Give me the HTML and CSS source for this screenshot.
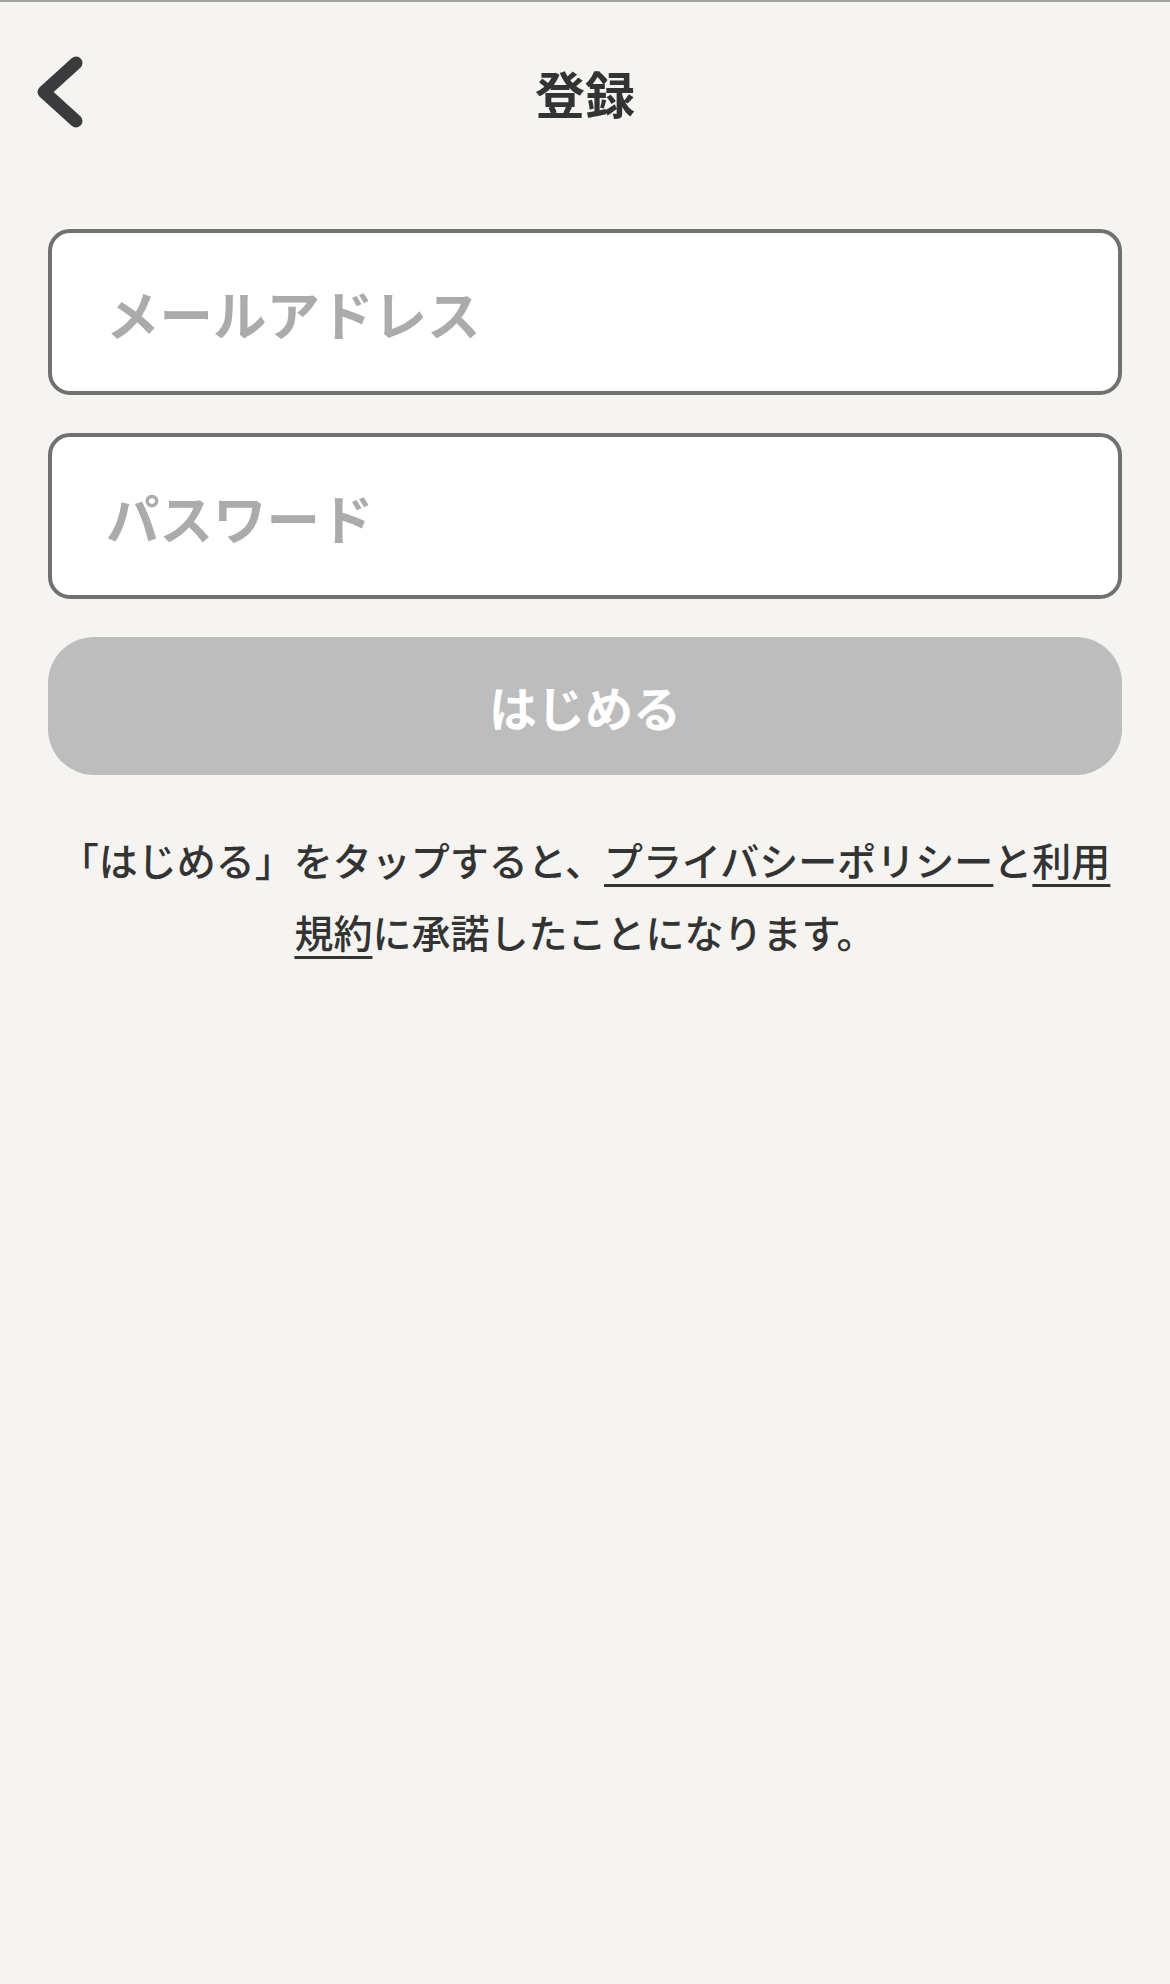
FILE: index.html
```html
<!DOCTYPE html>
<html lang="ja">
<head>
<meta charset="utf-8">
<title>登録</title>
<link rel="stylesheet" href="styles.css">
</head>
<body>
<div class="screen">
  <header class="header">
    <button class="back" aria-label="戻る">
      <svg width="52" height="76" viewBox="0 0 52 76">
        <polyline points="42,9 10,38 42,67" fill="none" stroke="#3a3b3d" stroke-width="13" stroke-linecap="round" stroke-linejoin="round"/>
      </svg>
    </button>
    <h1 class="title">登録</h1>
    <div></div>
  </header>
  <form class="form">
    <div class="field"><input class="input" type="email" placeholder="メールアドレス"></div>
    <div class="field"><input class="input" type="password" placeholder="パスワード"></div>
    <button type="button" class="submit">はじめる</button>
    <p class="terms">「はじめる」をタップすると、<a href="#">プライバシーポリシー</a>と<a href="#">利用<br>規約</a>に承諾したことになります。</p>
  </form>
</div>
</body>
</html>
```
FILE: styles.css
```css
html, body {
  margin: 0;
  padding: 0;
}
body {
  background: #f5f4f1;
  font-family: "Noto Sans CJK JP", "Noto Sans", sans-serif;
  color: #333333;
  min-height: 1984px;
}
.screen {
  border-top: 2px solid #a2a29d;
}
.header {
  height: 180px;
  display: grid;
  grid-template-columns: 1fr auto 1fr;
  align-items: center;
}
.back {
  justify-self: start;
  margin-left: 34px;
  padding: 0;
  border: none;
  background: none;
  display: flex;
  width: 52px;
  height: 76px;
}
.title {
  margin: 0;
  font-size: 50px;
  font-weight: 700;
  color: #333333;
  line-height: 1;
}
.form {
  padding: 47px 48px 0;
  display: flex;
  flex-direction: column;
}
.field {
  height: 166px;
  box-sizing: border-box;
  background: #ffffff;
  border: 4px solid #717171;
  border-radius: 22px;
  display: flex;
  align-items: center;
  margin-bottom: 38px;
}
.input {
  border: none;
  outline: none;
  background: transparent;
  width: 100%;
  padding: 0 0 0 54px;
  font-family: "Noto Sans CJK JP", "Noto Sans", sans-serif;
  font-size: 53.5px;
  font-weight: 700;
  color: #333;
}
.input::placeholder {
  color: #ababab;
}
.submit {
  height: 138px;
  border: none;
  border-radius: 46px;
  background: #bdbdbd;
  color: #ffffff;
  font-family: "Noto Sans CJK JP", "Noto Sans", sans-serif;
  font-size: 48px;
  font-weight: 700;
  padding: 0;
}
.terms {
  margin: 48px 0 0;
  text-align: center;
  font-size: 39px;
  line-height: 72px;
  font-weight: 500;
  color: #333333;
}
.terms a {
  color: #333333;
  text-decoration: underline;
  text-decoration-thickness: 3px;
  text-underline-offset: 8px;
}
```
